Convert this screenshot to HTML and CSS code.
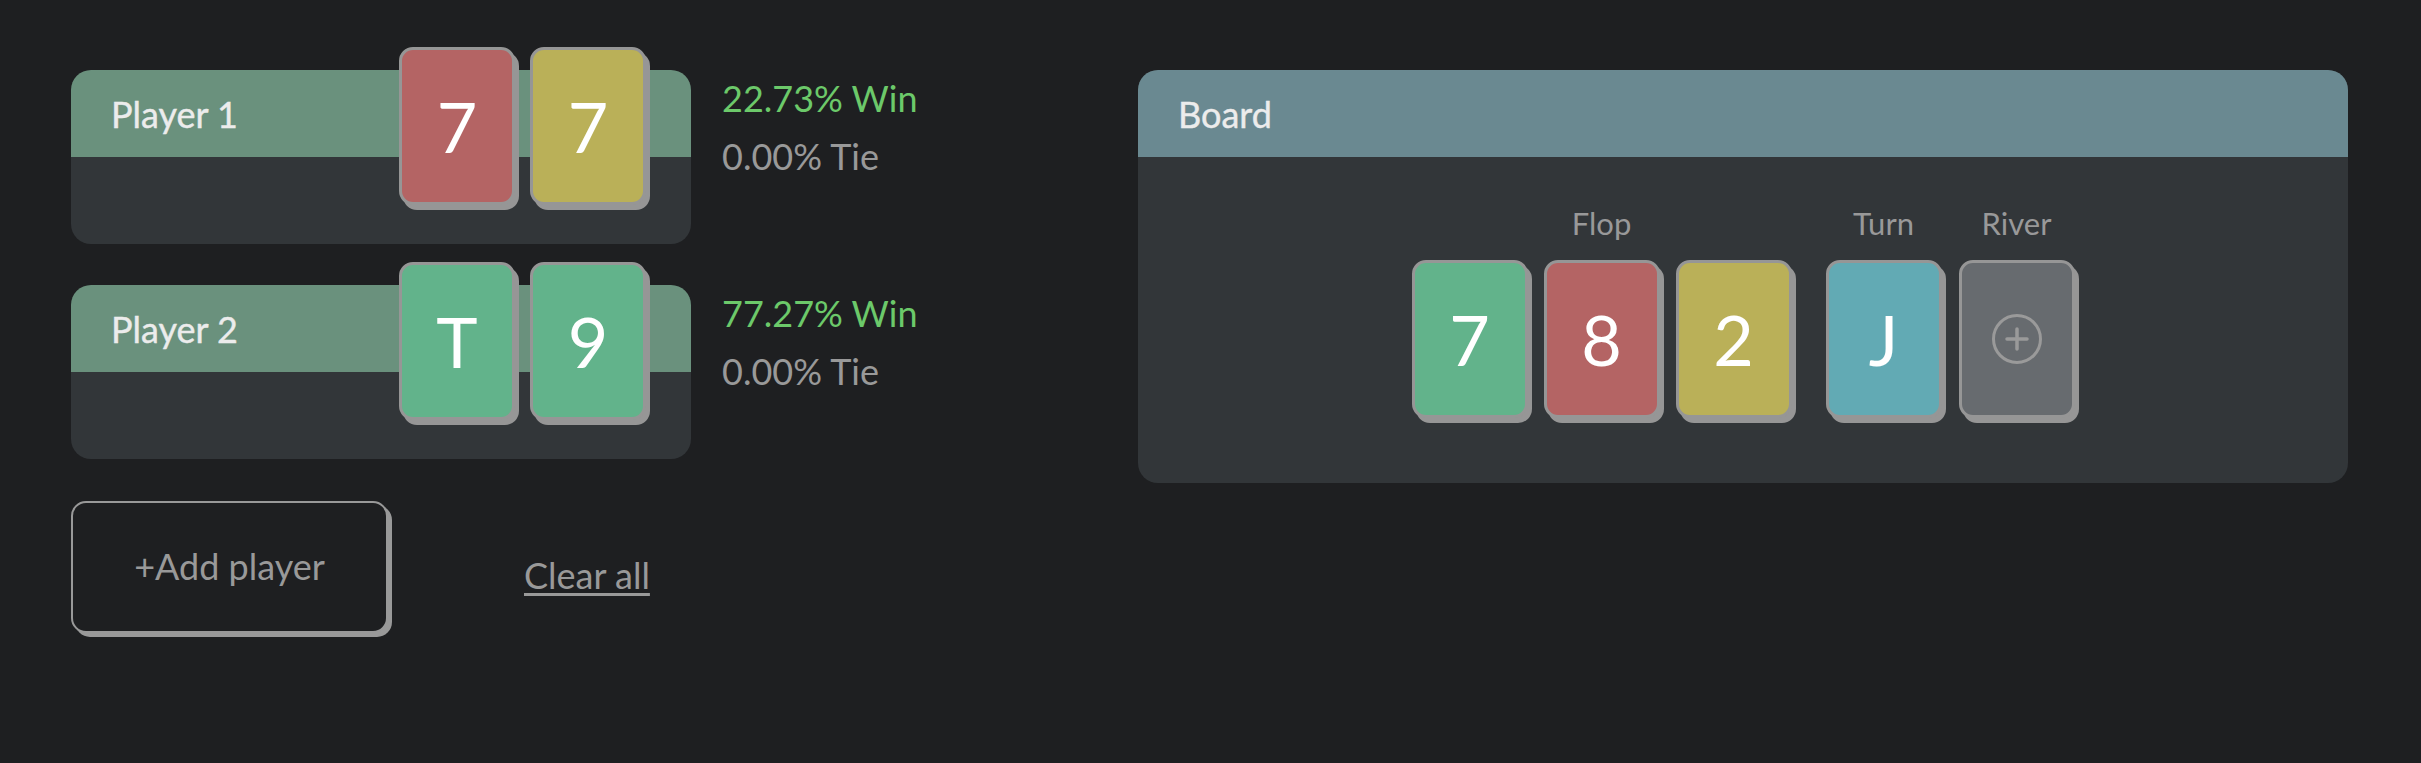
FILE: index.html
```html
<!DOCTYPE html>
<html lang="en">
<head>
<meta charset="utf-8">
<title>Poker odds</title>
<link rel="stylesheet" href="styles.css">
</head>
<body>
<div class="page">
  <div class="left">
    <div class="player-row">
      <div class="player">
        <div class="player-head">Player 1</div>
        <div class="player-body"></div>
        <div class="hand">
          <div class="pcard red">7</div>
          <div class="pcard yellow">7</div>
        </div>
      </div>
      <div class="odds">
        <div class="win">22.73% Win</div>
        <div class="tie">0.00% Tie</div>
      </div>
    </div>
    <div class="player-row">
      <div class="player">
        <div class="player-head">Player 2</div>
        <div class="player-body"></div>
        <div class="hand">
          <div class="pcard green">T</div>
          <div class="pcard green">9</div>
        </div>
      </div>
      <div class="odds">
        <div class="win">77.27% Win</div>
        <div class="tie">0.00% Tie</div>
      </div>
    </div>
    <div class="actions">
      <button class="add-btn">+Add player</button>
      <a class="clear" href="#">Clear all</a>
    </div>
  </div>
  <div class="board">
    <div class="board-head">Board</div>
    <div class="board-body">
      <div class="group flop">
        <div class="label">Flop</div>
        <div class="cards">
          <div class="pcard green">7</div>
          <div class="pcard red">8</div>
          <div class="pcard yellow">2</div>
        </div>
      </div>
      <div class="group turn">
        <div class="label">Turn</div>
        <div class="cards">
          <div class="pcard cyan">J</div>
        </div>
      </div>
      <div class="group river">
        <div class="label">River</div>
        <div class="cards">
          <div class="pcard empty">
            <svg width="52" height="52" viewBox="0 0 52 52" aria-hidden="true">
              <circle cx="26" cy="26" r="23.5" fill="none" stroke="#9a9a9a" stroke-width="3"/>
              <path d="M26 16v20M16 26h20" stroke="#9a9a9a" stroke-width="3.5" stroke-linecap="round"/>
            </svg>
          </div>
        </div>
      </div>
    </div>
  </div>
</div>
</body>
</html>
```

FILE: styles.css
```css
* { box-sizing: border-box; }
html, body {
  margin: 0;
  padding: 0;
  background: #1e1f21;
  font-family: Lato, "Open Sans", "Liberation Sans", sans-serif;
}
.page {
  display: flex;
  align-items: flex-start;
  padding: 70px 73px 0 71px;
  min-height: 763px;
}
.left {
  width: 1067px;
  flex: none;
}
.player-row {
  display: flex;
  align-items: flex-start;
  margin-bottom: 41px;
}
.player {
  position: relative;
  width: 620px;
  border-radius: 20px;
}
.player-head {
  height: 87px;
  background: #6a917d;
  border-radius: 20px 20px 0 0;
  color: #ececec;
  font-size: 36px;
  display: flex;
  align-items: center;
  padding-left: 40px;
  -webkit-text-stroke: 0.4px #ececec;
}
.player-body {
  height: 87px;
  background: #323639;
  border-radius: 0 0 20px 20px;
}
.hand {
  position: absolute;
  top: -23px;
  right: 45px;
  display: flex;
  gap: 15px;
}
.pcard {
  width: 116px;
  height: 158px;
  border: 3px solid #969696;
  border-radius: 14px;
  box-shadow: 4px 5px 0 #969696;
  color: #fff;
  font-size: 70px;
  line-height: 1;
  display: flex;
  align-items: center;
  justify-content: center;
  flex: none;
}
.red { background: #b46464; }
.yellow { background: #bab058; }
.green { background: #62b38b; }
.cyan { background: #62aab4; }
.empty { background: #676b6f; }

.odds {
  margin-left: 31px;
  font-size: 36px;
  line-height: 58px;
  margin-top: -1px;
}
.win { color: #6cc96a; }
.tie { color: #999999; }

.actions {
  display: flex;
  align-items: center;
  margin-top: 42px;
}
.add-btn {
  width: 317px;
  height: 132px;
  background: #1e1f21;
  border: 2px solid #999999;
  border-radius: 15px;
  box-shadow: 4px 4px 0 #999999;
  color: #999999;
  font-family: Lato, "Open Sans", "Liberation Sans", sans-serif;
  font-size: 36px;
  padding: 0 0 3px;
}
.clear {
  margin-left: 136px;
  margin-top: 16px;
  color: #999999;
  font-size: 36px;
  text-decoration: underline;
  text-underline-offset: 4px;
  text-decoration-thickness: 3px;
}

.board {
  flex: 1;
  border-radius: 20px;
  background: #323639;
  overflow: hidden;
}
.board-head {
  height: 87px;
  background: #6a8991;
  color: #ececec;
  font-size: 36px;
  display: flex;
  align-items: center;
  padding-left: 40px;
  -webkit-text-stroke: 0.4px #ececec;
}
.board-body {
  display: flex;
  justify-content: center;
  padding: 48px 0 60px;
}
.group {
  display: flex;
  flex-direction: column;
  align-items: center;
}
.turn { margin-left: 34px; }
.river { margin-left: 17px; }
.label {
  color: #999999;
  font-size: 31px;
  line-height: 37px;
  margin-bottom: 18px;
}
.cards {
  display: flex;
  gap: 16px;
  padding-bottom: 5px;
}
.pcard svg { display: block; }
```
